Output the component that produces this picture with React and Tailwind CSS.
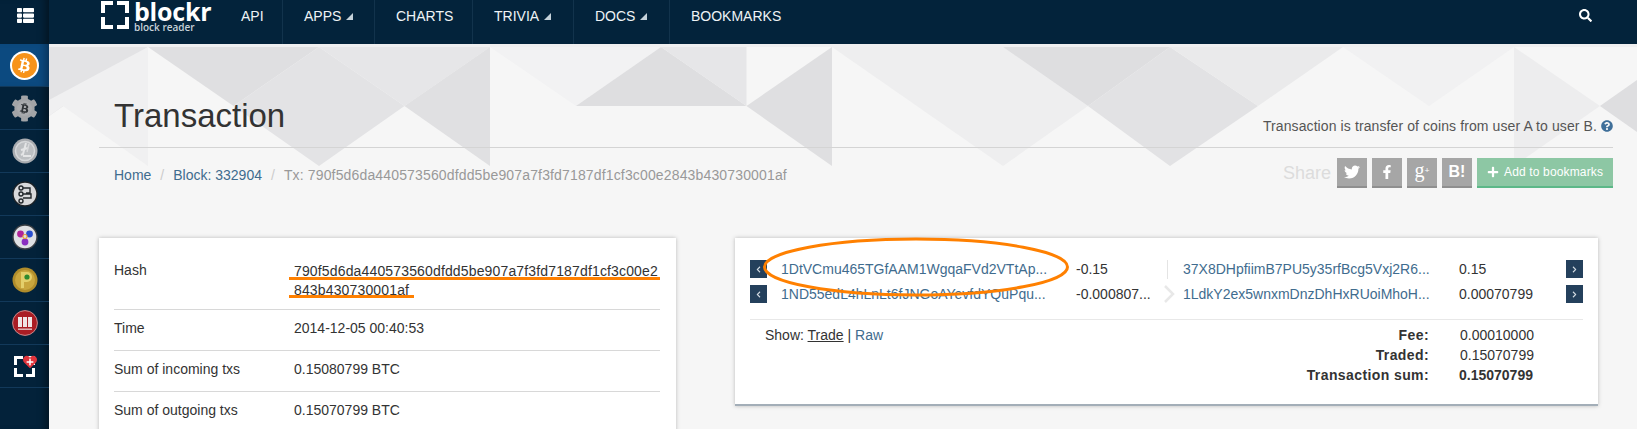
import React from 'react';
import { FaThList, FaSearch, FaTwitter, FaFacebookF, FaPlus, FaQuestionCircle, FaCog, FaBtc, FaChevronLeft, FaChevronRight, FaHeart } from 'react-icons/fa';

const tris = [
  ['49,47 148,47 49,116', '#e3e3e5'],
  ['148,47 148,166 63,106 49,116 49,100', '#f0f0f1'],
  ['148,47 319,47 233.5,106', '#dfdfe1'],
  ['319,47 233.5,106 319,166 404.5,106', '#e3e3e5'],
  ['319,47 490,47 404.5,106', '#e6e6e8'],
  ['490,47 490,166 404.5,106', '#e0e0e2'],
  ['490,47 661,47 576,106', '#f2f2f3'],
  ['661,47 576,106 746.5,106', '#dedee0'],
  ['661,47 746.5,47 746.5,106', '#e6e6e8'],
  ['832,47 832,166 746.5,106', '#dfdfe1'],
  ['832,47 1003,47 1088,106 1003,166', '#eeeeef'],
  ['1003,47 1170,47 1088,106', '#dedee0'],
  ['1170,47 1088,106 1170,166 1258,106', '#e2e2e4'],
  ['1170,47 1343,47 1258,106', '#eaeaeb'],
  ['1343,47 1514,47 1429,106', '#f1f1f2'],
  ['1514,47 1514,166 1600,106', '#ededee'],
  ['1600,106 1637,80 1637,132', '#dedee0'],
];

function Caret() {
  return (
    <svg width="7" height="7" viewBox="0 0 7 7" className="ml-[5px] mt-[1px]">
      <polygon points="7,0 7,7 0,7" fill="#c5d2da" />
    </svg>
  );
}

function CoinBtc() {
  return (
    <div className="w-[29px] h-[29px] rounded-full bg-white flex items-center justify-center">
      <div className="w-[25px] h-[25px] rounded-full bg-[#f7931a] flex items-center justify-center text-white">
        <FaBtc size={15} className="rotate-12" />
      </div>
    </div>
  );
}
function CoinGear() {
  return (
    <div className="relative w-[27px] h-[27px] flex items-center justify-center">
      <FaCog size={27} color="#a2a4a7" />
      <div className="absolute w-[15px] h-[15px] rounded-full bg-[#a9abae] flex items-center justify-center text-[#2f3337]">
        <FaBtc size={11} className="rotate-12" />
      </div>
    </div>
  );
}
function CoinLite() {
  return (
    <svg width="26" height="26" viewBox="0 0 26 26">
      <circle cx="13" cy="13" r="12.5" fill="#a9acb0" />
      <circle cx="13" cy="13" r="9.5" fill="#bcbfc2" stroke="#d6d8da" strokeWidth="1.5" />
      <path d="M14 5 L11 16 L9 17 M9 12 L16 10 M11 18 H19" stroke="#e4e5e6" strokeWidth="2" fill="none" />
      <path d="M17 6 L15 14" stroke="#d8d9db" strokeWidth="1.4" fill="none" />
    </svg>
  );
}
function CoinCircuit() {
  return (
    <svg width="26" height="26" viewBox="0 0 26 26">
      <circle cx="13" cy="13" r="12" fill="#d8d9db" stroke="#1b2126" strokeWidth="1.4" />
      <g fill="none" stroke="#23282c" strokeWidth="1.4">
        <circle cx="9" cy="7" r="2" />
        <circle cx="9" cy="13" r="2" />
        <circle cx="9" cy="20" r="2" />
        <path d="M11 7 H18 V12 H14 M11 13 H19 V17 H11" />
      </g>
    </svg>
  );
}
function CoinTri() {
  return (
    <svg width="26" height="26" viewBox="0 0 26 26">
      <circle cx="13" cy="13" r="12" fill="#dfe1e4" stroke="#3a3f44" strokeWidth="1.4" />
      <circle cx="8.5" cy="10" r="3.4" fill="#b0259a" />
      <circle cx="17.5" cy="10" r="3.4" fill="#2a4fd0" />
      <circle cx="13" cy="18" r="3.4" fill="#8a2fc0" />
      <circle cx="13" cy="12.5" r="2.6" fill="#e8a040" />
      <circle cx="13" cy="12.5" r="1.4" fill="#dfe1e4" />
    </svg>
  );
}
function CoinGold() {
  return (
    <svg width="26" height="26" viewBox="0 0 26 26">
      <circle cx="13" cy="13" r="12.5" fill="#b08d2b" />
      <circle cx="13" cy="13" r="10" fill="#c9a63e" />
      <path d="M9 5 V21 H12 V15 H15 A5 5 0 0 0 15 5 Z" fill="#e4cf6b" />
      <circle cx="15" cy="10" r="2.6" fill="#2f8a2f" />
    </svg>
  );
}
function CoinBook() {
  return (
    <svg width="26" height="26" viewBox="0 0 26 26">
      <circle cx="13" cy="13" r="12.4" fill="#aa1d24" stroke="#c98a8c" strokeWidth="1" />
      <path d="M6 7 H10 V17 H6 Z M11 7 H15 V17 H11 Z M16 7 H20 V17 H16 Z" fill="#f0e6e6" />
      <rect x="6" y="18.5" width="14" height="1.4" fill="#e2c4c4" />
    </svg>
  );
}
function Brackets({ size = 27, w = 3 }) {
  const s = size;
  const l = Math.round(s * 0.3);
  return (
    <svg width={s} height={s} viewBox={`0 0 ${s} ${s}`} fill="none" stroke="#fff" strokeWidth={w}>
      <path d={`M${w / 2} ${l + w} V${w / 2} H${l + w}`} />
      <path d={`M${s - l - w} ${w / 2} H${s - w / 2} V${l + w}`} />
      <path d={`M${w / 2} ${s - l - w} V${s - w / 2} H${l + w}`} />
      <path d={`M${s - l - w} ${s - w / 2} H${s - w / 2} V${s - l - w}`} />
    </svg>
  );
}
function CoinFav() {
  return (
    <div className="relative w-[22px] h-[22px] mt-[1px] ml-[1px]">
      <Brackets size={21} w={3} />
      <div className="absolute -top-[1px] left-[9px] text-[#e0343c]"><FaHeart size={14} /></div>
      <div className="absolute top-[2px] left-[12px] text-white"><FaPlus size={8} /></div>
    </div>
  );
}

const side = [CoinGear, CoinLite, CoinCircuit, CoinTri, CoinGold, CoinBook, CoinFav];

function Sidebar() {
  return (
    <aside className="relative w-[49px] shrink-0 bg-[#03223a] shadow-[inset_-9px_0_8px_-6px_rgba(0,0,0,0.45)] flex flex-col">
      <div className="h-[44px] pl-[17px] pt-[7px] text-white"><FaThList size={17} /></div>
      <div className="h-[43px] bg-[#0c4a80] border-b border-[#12395a] flex items-center justify-center shadow-[inset_-9px_0_8px_-6px_rgba(0,0,0,0.35)]">
        <CoinBtc />
      </div>
      {side.map((C, i) => (
        <div key={i} className="h-[43px] border-b border-[#12395a] flex items-center justify-center">
          <C />
        </div>
      ))}
    </aside>
  );
}

function Header() {
  const item = 'h-[44px] pl-[21px] pt-[6px] border-r border-[#12334c] flex items-start leading-[20px]';
  return (
    <header className="h-[44px] shrink-0 bg-[#03233b] flex text-[14px] text-[#eef3f6]">
      <div className="w-[172px] shrink-0 flex pl-[52px] pt-[1px]">
        <Brackets size={28} w={4} />
        <div className="ml-[5px]">
          <div className="text-[25px] leading-[20px] font-bold text-white font-['Open_Sans',sans-serif] tracking-[-0.2px]">blockr</div>
          <div className="text-[10px] leading-[10px] mt-[1px] font-semibold text-[#c8d2d9] font-['Open_Sans',sans-serif]">block reader</div>
        </div>
      </div>
      <div className={`h-[44px] pl-[20px] pt-[6px] border-r border-[#12334c] flex items-start leading-[20px] w-[62px]`}>API</div>
      <div className={`${item} w-[92px]`}>APPS<div className="pt-[6px]"><Caret /></div></div>
      <div className={`${item} w-[98px]`}>CHARTS</div>
      <div className={`${item} w-[101px]`}>TRIVIA<div className="pt-[6px]"><Caret /></div></div>
      <div className={`${item} w-[96px]`}>DOCS<div className="pt-[6px]"><Caret /></div></div>
      <div className="pl-[21px] pt-[6px] leading-[20px]">BOOKMARKS</div>
      <div className="ml-auto mr-[45px] pt-[9px] text-white"><FaSearch size={13} /></div>
    </header>
  );
}

function ShareBtn({ children }) {
  return (
    <div className="w-[30px] h-[30px] bg-[#a6a6a6] border-b-2 border-[#8f8f8f] text-white flex items-center justify-center">
      {children}
    </div>
  );
}

function InfoRow({ label, children, first }) {
  return (
    <div className={`grid grid-cols-[180px_1fr] text-[14px] leading-[19px] text-[#333] border-b border-[#d8d8d8] ${first ? 'h-[72px] pt-[23px]' : 'h-[41px] pt-[9px]'}`}>
      <div>{label}</div>
      <div className={first ? 'break-all mt-[1px] tracking-[0.15px]' : ''}>{children}</div>
    </div>
  );
}

function Nav({ dir }) {
  return (
    <div className="w-[17px] h-[18px] shrink-0 bg-[#24405c] text-[#d5dde4] flex items-center justify-center">
      {dir === 'l' ? <FaChevronLeft size={7} /> : <FaChevronRight size={7} />}
    </div>
  );
}

function TxRow({ a, av, b, bv, sep, chev }) {
  return (
    <div className="flex items-center h-[18px] text-[14px] text-[#333]">
      <Nav dir="l" />
      <a className="ml-[14px] w-[295px] shrink-0 text-[#3f6c8e] whitespace-nowrap">{a}</a>
      <span className="w-[91px] shrink-0 whitespace-nowrap">{av}</span>
      <div className="w-[16px] shrink-0 flex justify-start h-[18px] items-center">
        {sep && <div className="w-px h-[19px] bg-[#e4e4e4]" />}
        {chev && <svg width="12" height="18" viewBox="0 0 12 18" className="-ml-[4px]"><path d="M2 1 L10 9 L2 17" fill="none" stroke="#e8e8e8" strokeWidth="2.5" /></svg>}
      </div>
      <a className="w-[276px] shrink-0 text-[#3f6c8e] whitespace-nowrap">{b}</a>
      <span className="w-[107px] shrink-0">{bv}</span>
      <Nav dir="r" />
    </div>
  );
}

export default function App() {
  return (
    <div className="flex h-[429px] w-full overflow-hidden bg-[#f6f6f6] font-['Liberation_Sans',Arial,sans-serif]">
      <Sidebar />
      <div className="flex-1 min-w-0 flex flex-col">
        <Header />
        <main className="relative flex-1 min-h-0 overflow-hidden">
          <svg className="absolute left-0 top-0" width="1588" height="130" viewBox="49 44 1588 130">
            <rect x="49" y="44" width="1588" height="3" fill="#efeff0" />
            {tris.map(([p, c], i) => <polygon key={i} points={p} fill={c} />)}
          </svg>
          <div className="relative ml-[50px] mr-[24px]">
            <div className="h-[104px] border-b border-[#d4d4d4] flex justify-between items-end pl-[15px]">
              <h1 className="text-[33px] leading-[38px] text-[#333] pb-[12px]">Transaction</h1>
              <div className="flex items-center text-[14px] leading-[20px] text-[#555] tracking-[0.1px] pb-[11px]">
                Transaction is transfer of coins from user A to user B.
                <FaQuestionCircle size={12} color="#3f6f99" className="ml-[4px]" />
              </div>
            </div>
            <div className="flex justify-between items-start pl-[15px] pt-[10px]">
              <div className="text-[14px] leading-[20px] flex items-center pt-[7px]">
                <a className="text-[#3f6c8e]">Home</a>
                <span className="text-[#ccc] px-[9px]">/</span>
                <a className="text-[#3f6c8e]">Block: 332904</a>
                <span className="text-[#ccc] px-[9px]">/</span>
                <span className="text-[#999] tracking-[0.15px]">Tx: 790f5d6da440573560dfdd5be907a7f3fd7187df1cf3c00e2843b430730001af</span>
              </div>
              <div className="flex items-center gap-[5px]">
                <span className="text-[18px] text-[#dcdcdc] mr-[1px]">Share</span>
                <ShareBtn><FaTwitter size={16} /></ShareBtn>
                <ShareBtn><FaFacebookF size={14} /></ShareBtn>
                <ShareBtn><span className="font-['Liberation_Serif',serif] text-[20px] leading-[20px] -mt-[4px]">g<sup className="text-[9px] font-bold">+</sup></span></ShareBtn>
                <ShareBtn><span className="font-bold text-[16px] leading-[16px]">B!</span></ShareBtn>
                <div className="w-[136px] h-[30px] bg-[#8dc7a4] border-b-2 border-[#5cb888] text-white flex items-center pl-[10px] text-[12px] tracking-[0.15px]">
                  <FaPlus size={12} className="mr-[5px]" />Add to bookmarks
                </div>
              </div>
            </div>
            <div className="flex mt-[50px] items-start">
              <section className="relative w-[577px] h-[300px] shrink-0 bg-white shadow-[0_0_4px_rgba(0,0,0,0.25)] pl-[15px] pr-[16px]">
                <InfoRow first label="Hash">790f5d6da440573560dfdd5be907a7f3fd7187df1cf3c00e2843b430730001af</InfoRow>
                <InfoRow label="Time">2014-12-05 00:40:53</InfoRow>
                <InfoRow label="Sum of incoming txs">0.15080799 BTC</InfoRow>
                <InfoRow label="Sum of outgoing txs">0.15070799 BTC</InfoRow>
                <div className="absolute left-[190px] top-[39px] w-[371px] h-[3px] bg-[#ff8000]" />
                <div className="absolute left-[190px] top-[57px] w-[125px] h-[3px] bg-[#ff8000]" />
              </section>
              <section className="relative ml-[59px] w-[863px] h-[168px] shrink-0 bg-white border-b-2 border-[#a3aeb8] shadow-[0_0_4px_rgba(0,0,0,0.25)] px-[15px] pt-[22px]">
                <div className="flex flex-col gap-[7px]">
                  <TxRow a="1DtVCmu465TGfAAM1WgqaFVd2VTtAp..." av="-0.15" b="37X8DHpfiimB7PU5y35rfBcg5Vxj2R6..." bv="0.15" sep />
                  <TxRow a="1ND55edL4hLnLt6fJNGoAYevfdYQuPqu..." av="-0.000807..." b="1LdkY2ex5wnxmDnzDhHxRUoiMhoH..." bv="0.00070799" chev />
                </div>
                <div className="mt-[16px] border-t border-[#e8e8e8] pt-[5px] flex text-[14px] leading-[20px] text-[#333]">
                  <div className="pl-[15px] flex-1">
                    Show: <span className="underline">Trade</span> | <a className="text-[#3f6c8e]">Raw</a>
                  </div>
                  <div className="grid grid-cols-[auto_154px] justify-end">
                    <b className="text-right tracking-[0.4px]">Fee:</b><span className="pl-[31px]">0.00010000</span>
                    <b className="text-right tracking-[0.4px]">Traded:</b><span className="pl-[31px]">0.15070799</span>
                    <b className="text-right tracking-[0.4px]">Transaction sum:</b><b className="pl-[30px]">0.15070799</b>
                  </div>
                </div>
                <svg className="absolute left-[27px] -top-[1px]" width="308" height="60" viewBox="0 0 308 60">
                  <ellipse cx="154" cy="30" rx="151.5" ry="28" fill="none" stroke="#ff8000" strokeWidth="3" />
                </svg>
              </section>
            </div>
          </div>
        </main>
      </div>
    </div>
  );
}
